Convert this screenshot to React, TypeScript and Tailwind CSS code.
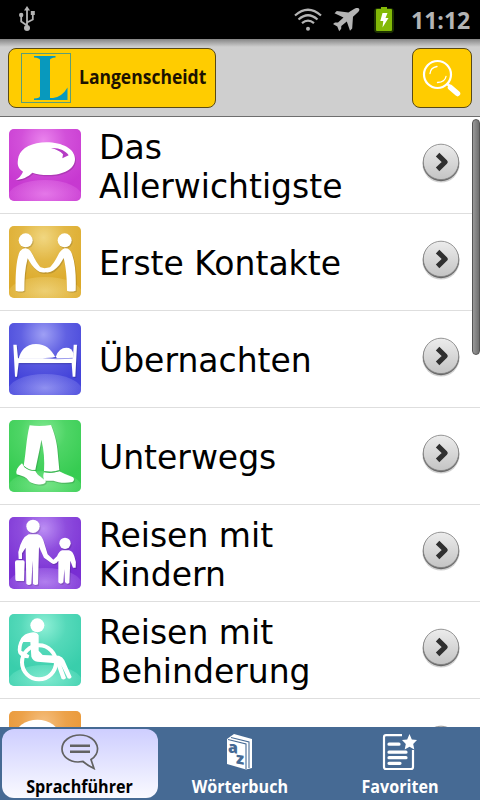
import type { ReactNode } from 'react';

interface Topic {
  id: string;
  label: string;
  light: string;
  base: string;
  art: ReactNode;
}

interface Tab {
  label: string;
  icon: ReactNode;
}

const topics: Topic[] = [
  {
    id: 'basics',
    label: 'Das Allerwichtigste',
    light: '#ee8cf0',
    base: '#c534cf',
    art: (
      <>
        <path d="M47 179 Q62 172 69 155 C51 145 51 130 56 109 C64 83 98 67 139 67 C187 67 225 87 225 117 C225 147 190 165 145 165 C125 165 109 163 97 158 C84 171 66 179 47 179Z" />
        <path d="M153 84 C175 82 198 92 206 106 L187 115 L189 103 C180 93 168 88 153 84Z" fill="#b53cc4" />
      </>
    ),
  },
  {
    id: 'contacts',
    label: 'Erste Kontakte',
    light: '#f3dc8c',
    base: '#dba724',
    art: (
      <>
        <circle cx="77" cy="70" r="21" />
        <circle cx="194" cy="70" r="21" />
        <path d="M47 221 C46 180 48 125 60 103 Q70 90 84 96 Q91 99 99 115 C108 133 114 143 122 151 L134 154 L150 151 C158 143 165 132 174 115 Q182 98 194 94 Q210 93 216 111 C228 145 228 185 227 221 Q212 226 201 221 C201 185 198 150 191 123 C183 138 174 151 161 160 Q151 168 137 166 Q121 169 111 160 C99 151 91 139 83 124 C75 153 73 185 73 221 Q62 226 47 221Z" />
      </>
    ),
  },
  {
    id: 'lodging',
    label: 'Übernachten',
    light: '#a9aaf8',
    base: '#3e3ed8',
    art: (
      <>
        <path d="M40 92 H50 L54 133 H219 L221 92 H231 L226 188 H218 L215 147 H56 L51 188 H45Z" />
        <path d="M56 134 C61 112 77 90 108 90 C136 90 153 106 166 129 L150 134Z" />
        <path d="M168 127 Q177 101 199 101 Q216 101 220 118 L219 136 H172Z" />
        <path d="M128 133 L167 129 L167 133 L205 132 L218 131 V134 L170 136Z" fill="#4141dc" opacity=".55" />
      </>
    ),
  },
  {
    id: 'transit',
    label: 'Unterwegs',
    light: '#8bed99',
    base: '#32ca4e',
    art: (
      <>
        <path d="M89 43 Q121 47 153 42 C161 60 170 91 172 113 L178 178 Q157 185 132 180 C134 150 132 115 124 86 C121 108 113 142 106 177 Q91 181 71 164 C79 119 78 87 89 43Z" />
        <path d="M66 157 L75 170 Q91 181 106 180 C114 196 130 201 137 210 Q139 217 126 220 C112 221 94 218 86 209 Q77 196 50 190 Q45 174 66 157Z" />
        <path d="M132 184 Q155 189 178 181 Q194 190 219 199 Q226 207 217 213 C196 217 174 215 160 209 L133 209 Q127 196 132 184Z" />
        <path d="M71 165 Q88 181 106 178 M132 182 Q155 187 178 179" fill="none" stroke="#38b850" strokeWidth="2" />
      </>
    ),
  },
  {
    id: 'children',
    label: 'Reisen mit Kindern',
    light: '#c49af8',
    base: '#7529d1',
    art: (
      <>
        <circle cx="99" cy="55" r="20" />
        <path d="M86 79 H113 Q124 81 130 97 L143 139 L160 155 L171 145 Q178 128 187 127 H207 Q218 129 223 145 Q230 161 227 179 L219 179 L211 158 L208 225 Q200 230 195 222 L193 184 L190 223 Q182 231 175 223 L175 158 Q166 173 154 165 L132 149 L117 116 L114 229 Q105 234 99 227 L98 158 L94 227 Q87 235 79 227 L77 119 L66 136 L66 153 H56 L55 132 Q64 89 86 79Z" />
        <circle cx="195" cy="106" r="17" />
        <path d="M51 157 H69 Q74 157 74 163 L72 219 H50 Q46 219 46 213 L45 163 Q45 157 51 157Z" />
      </>
    ),
  },
  {
    id: 'access',
    label: 'Reisen mit Behinderung',
    light: '#9af4dc',
    base: '#34cca9',
    art: (
      <>
        <circle cx="112" cy="61" r="21" />
        <circle cx="117" cy="172" r="51" fill="none" stroke="#fff" strokeWidth="12" />
        <path d="M91 83 Q110 79 116 91 L116 137 L128 150 L177 152 Q188 155 193 166 L215 216 Q212 223 203 220 L184 181 L198 219 Q194 226 185 222 L168 175 L112 170 Q99 168 94 155 L91 111 L70 111 Q65 116 64 137 L88 151 L85 160 Q65 160 55 145 Q49 124 64 99 Q73 86 91 83Z" />
      </>
    ),
  },
  {
    id: 'food',
    label: '',
    light: '#f6c489',
    base: '#e8922c',
    art: <ellipse cx="112" cy="102" rx="66" ry="49" />,
  },
];

function TopicIcon({ topic }: { topic: Topic }) {
  const { id, light, base, art } = topic;
  return (
    <svg width="72" height="72" viewBox="27 27 216 216" className="shrink-0">
      <defs>
        <radialGradient id={`glow-${id}`} cx=".48" cy=".16" r=".7">
          <stop offset="0" stopColor={light} stopOpacity=".9" />
          <stop offset=".45" stopColor={light} stopOpacity=".32" />
          <stop offset="1" stopColor={light} stopOpacity=".05" />
        </radialGradient>
        <radialGradient id={`hill-${id}`} cx=".5" cy=".4" r=".55">
          <stop offset="0" stopColor={light} stopOpacity=".75" />
          <stop offset="1" stopColor={light} stopOpacity=".12" />
        </radialGradient>
        <clipPath id={`clip-${id}`}>
          <rect x="27" y="27" width="216" height="216" rx="15" />
        </clipPath>
      </defs>
      <g clipPath={`url(#clip-${id})`}>
        <rect x="27" y="27" width="216" height="216" fill={base} />
        <rect x="27" y="27" width="216" height="216" fill={`url(#glow-${id})`} />
        <ellipse cx="135" cy="232" rx="112" ry="52" fill={`url(#hill-${id})`} />
        <g fill="#000" opacity=".14" transform="translate(3 4)">
          {id === 'access' ? null : art}
        </g>
        <g fill="#fff">{art}</g>
      </g>
    </svg>
  );
}

function Chevron() {
  return (
    <svg width="40" height="42" viewBox="0 0 40 42" className="shrink-0">
      <defs>
        <linearGradient id="disc" x1="0" y1="0" x2="0" y2="1">
          <stop offset="0" stopColor="#ececec" />
          <stop offset="1" stopColor="#c4c4c4" />
        </linearGradient>
      </defs>
      <circle cx="20" cy="22" r="18.6" fill="#000" opacity=".18" />
      <circle cx="20" cy="21" r="18.2" fill="#000" opacity=".5" />
      <circle cx="20" cy="19.9" r="17.7" fill="url(#disc)" stroke="#808080" strokeWidth=".8" />
      <path d="M16.600 12.600 L24.200 20 L16.600 27.400" fill="none" stroke="#303030" strokeWidth="5" strokeLinejoin="round" />
    </svg>
  );
}

function StatusBar() {
  return (
    <div className="flex h-[39px] shrink-0 items-center bg-black text-[#b4b4b4]">
      <svg width="18" height="26" viewBox="0 0 18 26" className="ml-[18px] -mt-px" fill="none" stroke="currentColor" strokeWidth="1.8">
        <path d="M9 3 V23 M9 19.5 L3.2 15.5 V10 M9 16.5 L14.8 13.5 V8" />
        <path d="M9 0 L12 4.6 H6Z" fill="currentColor" stroke="none" />
        <circle cx="3.2" cy="9" r="2.2" fill="currentColor" stroke="none" />
        <rect x="12.8" y="5" width="4" height="4" fill="currentColor" stroke="none" />
        <circle cx="9" cy="22" r="3" fill="currentColor" stroke="none" />
      </svg>
      <svg width="28" height="24" viewBox="0 0 28 24" className="ml-[258px]" fill="none" stroke="currentColor" strokeWidth="2.200">
        <path d="M1 7.5 Q14 -4 27 7.5 M4.5 11.5 Q14 3 23.5 11.5 M8 15.2 Q14 10 20 15.2" />
        <circle cx="14" cy="20.7" r="2" fill="currentColor" stroke="none" />
      </svg>
      <svg width="27" height="24" viewBox="0 0 27 24" className="ml-[11px]" fill="currentColor">
        <path d="M25.8 .4 Q27.2 1.8 25.2 4 L20 8.8 L19.2 20.5 L17 22.7 L13.8 13.6 L8.3 18 L8.2 20.8 L6.2 23.2 L4.3 18.5 L0 16 L2 14.5 L5 14.5 L10.5 9.5 L1.5 5.2 L3.8 3 L15.4 4.5 L21 1 Q24 -1 25.8 .4Z" />
      </svg>
      <svg width="24" height="32" viewBox="0 0 24 32" className="ml-[12px]">
        <rect x="2" y="4" width="20" height="25" rx="4" fill="#3a6500" opacity=".5" />
        <path d="M9 3 H15 V5 H19 Q20 5 20 6 V26 Q20 27 19 27 H5 Q4 27 4 26 V6 Q4 5 5 5 H9Z" fill="#83b908" />
        <path d="M10.5 9 H15.5 L13.5 14 H16.5 L10.5 23.5 L11.3 17 H8.3Z" fill="#fff" />
      </svg>
      <span className="ml-[15px] inline-block w-0 origin-left scale-x-[0.96] whitespace-nowrap font-['Open_Sans'] text-[24px] font-bold leading-none">
        11:12
      </span>
    </div>
  );
}

function Header() {
  return (
    <header className="flex h-[78px] shrink-0 items-start justify-between border-b border-[#6e6e6e] bg-[#cfcfcf] bg-[linear-gradient(#858585,#cfcfcf_8px)] px-2 pt-[9px]">
      <div className="flex h-[60px] w-[208px] items-center rounded-lg border border-[#594a16] bg-[#fc0] pl-3">
        <svg width="51" height="52" viewBox="0 0 51 52" fill="#0899bd">
          <rect x=".5" y="1.500" width="49" height="49" fill="none" stroke="#5c9e78" />
          <path d="M13 4 H34.500 V5.500 Q29 6 29 8 V46 H32 Q41 45 46.500 35.500 V48 H13 V46.500 Q19 46 19 44 V8 Q19 6 13 5.500Z" />
        </svg>
        <span className="-mt-0.5 ml-[7px] inline-block w-0 origin-left scale-x-[0.875] whitespace-nowrap font-['Open_Sans'] text-[20px] font-bold leading-none text-[#1c1200]">
          Langenscheidt
        </span>
      </div>
      <button aria-label="Suchen" className="flex size-[60px] items-center justify-center rounded-lg border border-[#594a16] bg-[#fc0]">
        <svg width="40" height="38" viewBox="0 0 40 38" fill="none" stroke="#fff" strokeLinecap="round">
          <circle cx="15.5" cy="15.500" r="13.5" strokeWidth="2.2" />
          <path d="M8 14.500 Q8.500 8.500 15 7.500 M15.500 23.500 Q23 23 24 17.500" strokeWidth="1.3" />
          <path d="M25.500 25 L28 27.500" strokeWidth="2.500" />
          <path d="M28.500 28.500 L35.500 34.500" strokeWidth="5.500" />
        </svg>
      </button>
    </header>
  );
}

const tabs: Tab[] = [
  {
    label: 'Sprachführer',
    icon: (
      <svg width="40" height="36" viewBox="0 0 40 36" fill="none" stroke="#626262" strokeWidth="1.7">
        <path d="M34 34.500 L31 25.500 Q38 21 37.500 14 C36.500 6 29 1 20 1 C10 1 2 7 2 15 C2 22 9 28 18 28 L23 27.500 Q27 31 34 34.500Z" />
        <path d="M10 11.800 H30 M10 17.800 H30" strokeWidth="2.400" />
      </svg>
    ),
  },
  {
    label: 'Wörterbuch',
    icon: (
      <svg width="26" height="36" viewBox="0 0 26 36">
        <path d="M0 5 L7 0 L25 5 V34 L19 35.500 L0 30Z" fill="#fff" />
        <path d="M1 5.500 L19 10 V35 M4 3.500 L22 8 V34" fill="none" stroke="#466a94" strokeWidth="1.100" />
        <text x="1" y="18" transform="skewY(9)" fontFamily="Open Sans" fontSize="16" fontWeight="800" fill="#466a94">a</text>
        <text x="9" y="28" transform="skewY(9)" fontFamily="Open Sans" fontSize="16" fontWeight="800" fill="#466a94">z</text>
      </svg>
    ),
  },
  {
    label: 'Favoriten',
    icon: (
      <svg width="35" height="38" viewBox="0 0 35 38" fill="none" stroke="#fff" strokeWidth="2.200" className="-ml-px">
        <path d="M20 2.200 H4 Q2 2.200 2 4.200 V34 Q2 36 4 36 H29 Q31 36 31 34 V17" />
        <path d="M7 11.200 H17 M7 19.200 H24 M7 24.700 H24 M7 30.300 H18" strokeWidth="3.200" strokeLinecap="round" />
        <path d="M27.500 1 L29.800 6.400 L35 7 L31.200 10.900 L32.300 16.500 L27.500 13.700 L22.700 16.500 L23.800 10.900 L20 7 L25.200 6.400Z" fill="#fff" stroke="none" />
      </svg>
    ),
  },
];

export default function App() {
  return (
    <div className="flex h-[800px] w-[480px] flex-col overflow-hidden bg-white">
      <StatusBar />
      <Header />
      <main className="relative h-[610px] shrink-0 overflow-hidden">
        {topics.map(topic => (
          <div key={topic.id} className="flex h-[97px] items-start border-b border-[#dedede] pl-[9px] pt-3">
            <TopicIcon topic={topic} />
            <div className="-mt-3 ml-[18px] flex h-[95px] w-[300px] items-center pt-1 font-['DejaVu_Sans'] text-[33px] leading-[39px] text-black">
              <span className="w-[260px]">{topic.label}</span>
            </div>
            <div className="ml-[22px] mt-[13px]">
              <Chevron />
            </div>
          </div>
        ))}
        {/* Scrollbar */}
        <div className="absolute right-0 top-[2px] h-[236px] w-2 rounded-full border border-[#555] bg-linear-to-r from-[#999] to-[#707070]" />
      </main>
      <nav className="flex h-[73px] shrink-0 bg-[#466a94]">
        {tabs.map((tab, i) => (
          <div key={tab.label} className="w-40 p-0.5">
            <div
              className={`flex h-[69px] w-[156px] flex-col items-center rounded-xl ${
                i === 0 ? 'bg-linear-to-b from-[#ceceff] to-[#fafaff] text-black' : 'text-white'
              }`}
            >
              <div className="flex h-[46px] items-center">{tab.icon}</div>
              <span className="inline-block scale-x-[0.895] whitespace-nowrap font-['Open_Sans'] text-[18px] font-bold leading-[22px]">
                {tab.label}
              </span>
            </div>
          </div>
        ))}
      </nav>
    </div>
  );
}
